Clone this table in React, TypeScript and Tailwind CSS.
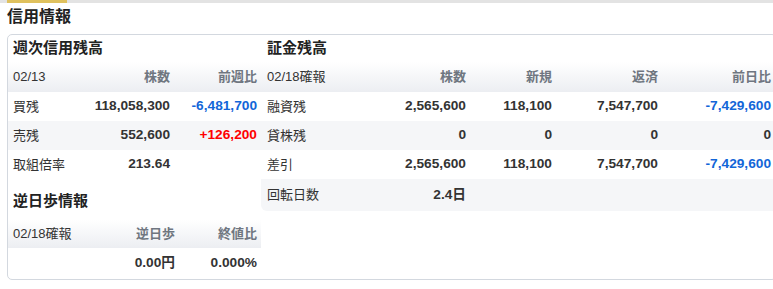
import React from "react";

const F = { fontFamily: '"Liberation Sans", "Noto Sans CJK JP", sans-serif' };

export default function App() {
  const blue = "text-[#1266d8]";
  const red = "text-[#ff0000]";
  const num = "text-right font-bold text-[13.7px]";
  const head = "text-right font-bold text-[#6f7680]";
  return (
    <div style={F} className="w-[773px] h-[289px] overflow-hidden bg-white text-[13px] text-[#333]">
      <div className="h-[3px] bg-[#e3e3e3] flex">
        <div className="ml-[7px] w-[60px] bg-[#dfc15e]" />
      </div>
      <div className="h-[31px] flex items-center pb-[4px] pl-[7px] text-[16px] font-bold text-[#222]">信用情報</div>
      <div className="ml-[7px] w-[770px] h-[246px] border border-[#d3d8df] rounded-[5px] flex overflow-hidden">
        {/* left */}
        <div className="w-[253px] flex flex-col">
          <div className="h-[27px] flex items-center pl-[5px] text-[15px] font-bold text-[#222]">週次信用残高</div>
          <div className="h-[30px] flex items-center bg-linear-to-b from-white to-[#eceef2]">
            <div className="w-[82px] pl-[5px]">02/13</div>
            <div className={`w-[84px] pr-[4px] ${head}`}>株数</div>
            <div className={`w-[87px] pr-[4px] ${head}`}>前週比</div>
          </div>
          <div className="h-[29px] flex items-center">
            <div className="w-[82px] pl-[5px]">買残</div>
            <div className={`w-[84px] pr-[4px] ${num}`}>118,058,300</div>
            <div className={`w-[87px] pr-[4px] ${num} ${blue}`}>-6,481,700</div>
          </div>
          <div className="h-[29px] flex items-center bg-[#f5f6f8]">
            <div className="w-[82px] pl-[5px]">売残</div>
            <div className={`w-[84px] pr-[4px] ${num}`}>552,600</div>
            <div className={`w-[87px] pr-[4px] ${num} ${red}`}>+126,200</div>
          </div>
          <div className="h-[29px] flex items-center">
            <div className="w-[82px] pl-[5px]">取組倍率</div>
            <div className={`w-[84px] pr-[4px] ${num}`}>213.64</div>
            <div className="w-[87px]" />
          </div>
          <div className="h-[41px] flex items-end pb-[8px] pl-[5px] text-[15px] font-bold text-[#222]">逆日歩情報</div>
          <div className="h-[28px] flex items-center bg-linear-to-b from-white to-[#eceef2]">
            <div className="w-[87px] pl-[5px]">02/18確報</div>
            <div className={`w-[84px] pr-[4px] ${head}`}>逆日歩</div>
            <div className={`w-[82px] pr-[4px] ${head}`}>終値比</div>
          </div>
          <div className="h-[30px] flex items-center">
            <div className="w-[87px]" />
            <div className={`w-[84px] pr-[4px] ${num}`}>0.00円</div>
            <div className={`w-[82px] pr-[4px] ${num}`}>0.000%</div>
          </div>
        </div>
        {/* right */}
        <div className="flex-1 flex flex-col">
          <div className="h-[27px] flex items-center pl-[6px] text-[15px] font-bold text-[#222]">証金残高</div>
          <div className="h-[30px] flex items-center bg-linear-to-b from-white to-[#eceef2]">
            <div className="w-[109px] pl-[6px]">02/18確報</div>
            <div className={`w-[100px] pr-[4px] ${head}`}>株数</div>
            <div className={`w-[86px] pr-[4px] ${head}`}>新規</div>
            <div className={`w-[106px] pr-[4px] ${head}`}>返済</div>
            <div className={`flex-1 pr-[5px] ${head}`}>前日比</div>
          </div>
          <div className="h-[29px] flex items-center">
            <div className="w-[109px] pl-[6px]">融資残</div>
            <div className={`w-[100px] pr-[4px] ${num}`}>2,565,600</div>
            <div className={`w-[86px] pr-[4px] ${num}`}>118,100</div>
            <div className={`w-[106px] pr-[4px] ${num}`}>7,547,700</div>
            <div className={`flex-1 pr-[5px] ${num} ${blue}`}>-7,429,600</div>
          </div>
          <div className="h-[29px] flex items-center bg-[#f5f6f8]">
            <div className="w-[109px] pl-[6px]">貸株残</div>
            <div className={`w-[100px] pr-[4px] ${num}`}>0</div>
            <div className={`w-[86px] pr-[4px] ${num}`}>0</div>
            <div className={`w-[106px] pr-[4px] ${num}`}>0</div>
            <div className={`flex-1 pr-[5px] ${num}`}>0</div>
          </div>
          <div className="h-[29px] flex items-center">
            <div className="w-[109px] pl-[6px]">差引</div>
            <div className={`w-[100px] pr-[4px] ${num}`}>2,565,600</div>
            <div className={`w-[86px] pr-[4px] ${num}`}>118,100</div>
            <div className={`w-[106px] pr-[4px] ${num}`}>7,547,700</div>
            <div className={`flex-1 pr-[5px] ${num} ${blue}`}>-7,429,600</div>
          </div>
          <div className="h-[32px] flex items-center bg-[#f5f6f8] rounded-bl-[6px]">
            <div className="w-[109px] pl-[6px]">回転日数</div>
            <div className={`w-[100px] pr-[4px] ${num}`}>2.4日</div>
          </div>
        </div>
      </div>
    </div>
  );
}
